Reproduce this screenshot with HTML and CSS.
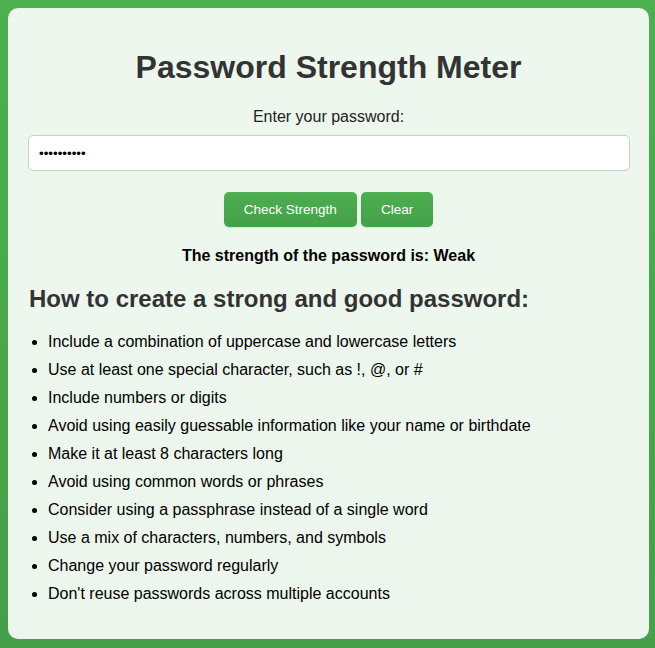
FILE: index.html
```html
<!DOCTYPE html>
<html lang="en">
<head>
<meta charset="utf-8">
<title>Password Strength Meter</title>
<link rel="stylesheet" href="styles.css">
</head>
<body>
<div class="container">
  <h1 class="title">Password Strength Meter</h1>
  <label class="label" for="pw">Enter your password:</label>
  <input class="pw-input" id="pw" type="password" value="abcdefghij">
  <div class="actions">
    <button class="btn">Check Strength</button>
    <button class="btn">Clear</button>
  </div>
  <p class="result">The strength of the password is: Weak</p>
  <h2 class="subtitle">How to create a strong and good password:</h2>
  <ul class="tips">
    <li>Include a combination of uppercase and lowercase letters</li>
    <li>Use at least one special character, such as !, @, or #</li>
    <li>Include numbers or digits</li>
    <li>Avoid using easily guessable information like your name or birthdate</li>
    <li>Make it at least 8 characters long</li>
    <li>Avoid using common words or phrases</li>
    <li>Consider using a passphrase instead of a single word</li>
    <li>Use a mix of characters, numbers, and symbols</li>
    <li>Change your password regularly</li>
    <li>Don't reuse passwords across multiple accounts</li>
  </ul>
</div>
</body>
</html>
```
FILE: styles.css
```css
html {
  min-height: 100%;
  background: linear-gradient(#4caf50, #45a049);
}
body {
  margin: 0;
  padding: 8px 6px 10px 8px;
  font-family: "Liberation Sans", Arial, sans-serif;
}
.container {
  width: 641px;
  box-sizing: border-box;
  padding: 20px;
  background: rgba(255, 255, 255, 0.9);
  border-radius: 10px;
  text-align: center;
}
.title {
  font-size: 32px;
  line-height: 37px;
  color: #333;
  margin: 21px 0 22px;
}
.label {
  display: block;
  font-size: 16px;
  line-height: 18px;
  color: #222;
  margin-bottom: 9px;
}
.pw-input {
  display: block;
  width: calc(100% + 1px);
  height: 36px;
  box-sizing: border-box;
  padding: 0 10px;
  border: 1px solid #ccc;
  border-radius: 5px;
  background: #fff;
  font-size: 13.33px;
  outline: none;
}
.actions {
  margin-top: 21px;
  display: flex;
  justify-content: center;
  gap: 4px;
}
.btn {
  height: 35px;
  padding: 0 20px;
  border: none;
  border-radius: 5px;
  background: linear-gradient(#4caf50, #45a049);
  color: #fff;
  font-family: "Liberation Sans", Arial, sans-serif;
  font-size: 13.5px;
  box-shadow: 0 1px 2px rgba(0, 0, 0, 0.1);
}
.result {
  font-size: 16px;
  line-height: 18px;
  font-weight: bold;
  color: #000;
  margin: 20px 0 20px;
}
.subtitle {
  text-align: left;
  font-size: 24px;
  line-height: 28px;
  color: #333;
  margin: 0 0 20px 1px;
}
.tips {
  text-align: left;
  margin: 0;
  padding-left: 20px;
  font-size: 16px;
  line-height: 18px;
  color: #000;
}
.tips li {
  margin-bottom: 10px;
}
.tips li:last-child {
  margin-bottom: 16px;
}
```
